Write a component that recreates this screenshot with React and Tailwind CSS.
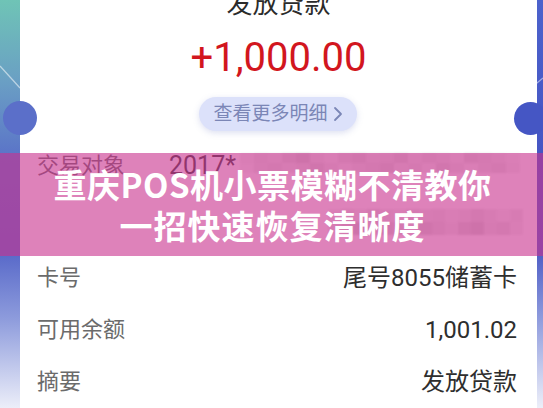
import React from "react";

const font = { fontFamily: 'Roboto, "Noto Sans CJK SC", "Noto Sans", sans-serif' };
const cjk = { fontFamily: '"Noto Sans CJK SC", "Noto Sans", sans-serif' };

// gray tones of the blurred mosaic, one entry per block
const mosaicTop = [
  [0.08, 0.14, 0.1, 0.18, 0.24, 0.12, 0.08, 0.16, 0.2, 0.12, 0.14, 0.2, 0.1, 0.16, 0.12, 0.08, 0.18, 0.14, 0.1, 0.06],
  [0.05, 0.12, 0.16, 0.1, 0.14, 0.2, 0.12, 0.08, 0.12, 0.16, 0.2, 0.1, 0.14, 0.08, 0.18, 0.12, 0.06, 0.12, 0.16, 0.08],
];
const mosaicBottom = [
  [0.06, 0.12, 0.08, 0.16, 0.1, 0.08, 0.14, 0.1, 0.12, 0.08, 0.1, 0.16, 0.1, 0.06, 0.1],
  [0.1, 0.18, 0.24, 0.14, 0.2, 0.16, 0.12, 0.22, 0.16, 0.1, 0.2, 0.24, 0.12, 0.16, 0.08],
];

const Mosaic = ({ rows, cell }) => (
  <div className="flex flex-col blur-[1px]">
    {rows.map((r, i) => (
      <div key={i} className="flex">
        {r.map((o, j) => (
          <div
            key={j}
            className={cell + " bg-[#555]"}
            style={{ opacity: o }}
          />
        ))}
      </div>
    ))}
  </div>
);

const Row = ({ label, value }) => (
  <div className="flex items-center justify-between pl-[17px] pr-[20px] h-[56px]">
    <span className="text-[22px] text-[#6b6b6b]">{label}</span>
    <span className="text-[24px] text-[#2e2e2e]">{value}</span>
  </div>
);

export default function App() {
  return (
    <div
      className="relative w-[543px] h-[408px] overflow-hidden flex bg-white"
      style={font}
    >
      {/* left background strip */}
      <div className="w-[20px] shrink-0 bg-[linear-gradient(180deg,#6fc4b6_0%,#6a9fc4_20%,#5b74c8_38%,#5869c9_62%,#8d9bdc_78%,#eceef9_100%)]" />

      {/* ticket card */}
      <div className="flex-1 flex flex-col bg-white">
        <div className="-mt-[12px] text-center text-[26px] leading-[32px] text-[#2b2b2b]">
          发放贷款
        </div>
        <div className="mt-[14px] text-center text-[40px] leading-[48px] text-[#d2161e]">
          +1,000.00
        </div>
        <div className="mt-[15px] flex justify-center">
          <div className="h-[34px] w-[158px] rounded-full bg-[#dce1fa] flex items-center justify-center gap-[6px] text-[19px] text-[#7b86b6] shadow-[0_2px_6px_rgba(120,130,200,0.25)]">
            <span>查看更多明细</span>
            <svg width="10" height="16" viewBox="0 0 10 16" fill="none">
              <path d="M2 2l6 6-6 6" stroke="#7b86b6" strokeWidth="1.8" strokeLinecap="round" strokeLinejoin="round" />
            </svg>
          </div>
        </div>

        <div className="mt-[8px] h-[57px] flex items-center px-[17px]">
          <span className="text-[22px] text-[#6b6b6b] w-[132px]">交易对象</span>
          <span className="text-[25px] text-[#3a3a3a]">2017*</span>
          <div className="ml-[4px] -mt-[6px]">
            <Mosaic rows={mosaicTop} cell="w-[14px] h-[10px]" />
          </div>
        </div>
        <div className="h-[64px] flex items-center justify-end pr-[14px]">
          <Mosaic rows={mosaicBottom} cell="w-[13px] h-[13px]" />
        </div>
        <Row label="卡号" value="尾号8055储蓄卡" />
        <Row label="可用余额" value="1,001.02" />
        <Row label="摘要" value="发放贷款" />
      </div>

      {/* right background strip */}
      <div className="w-[12px] shrink-0 bg-[linear-gradient(180deg,#4c62cc_0%,#4656c4_38%,#4f5ec6_62%,#8e9bdd_78%,#edeff9_100%)]" />

      {/* light streaks on the strips */}
      <svg className="absolute left-0 top-0" width="543" height="130" viewBox="0 0 543 130">
        <line x1="0" y1="66" x2="20" y2="88" stroke="rgba(255,255,255,0.55)" strokeWidth="1.2" />
        <line x1="543" y1="78" x2="531" y2="88" stroke="rgba(255,255,255,0.5)" strokeWidth="1.2" />
      </svg>

      {/* ticket notches */}
      <div className="absolute left-[3px] top-[101px] w-[34px] h-[34px] rounded-full bg-[#5b6fc9]" />
      <div className="absolute left-[514px] top-[102px] w-[33px] h-[33px] rounded-full bg-[#4556c4]" />

      {/* pink title banner */}
      <div className="absolute left-0 top-[153px] w-full h-[103px] bg-[rgba(201,50,143,0.61)] flex flex-col items-center justify-center pl-[2px]">
        <div className="text-white font-bold text-[33px] leading-[41px] tracking-[0.5px]" style={cjk}>
          重庆POS机小票模糊不清教你
        </div>
        <div className="text-white font-bold text-[33px] leading-[41px] tracking-[1px]" style={cjk}>
          一招快速恢复清晰度
        </div>
      </div>
    </div>
  );
}
